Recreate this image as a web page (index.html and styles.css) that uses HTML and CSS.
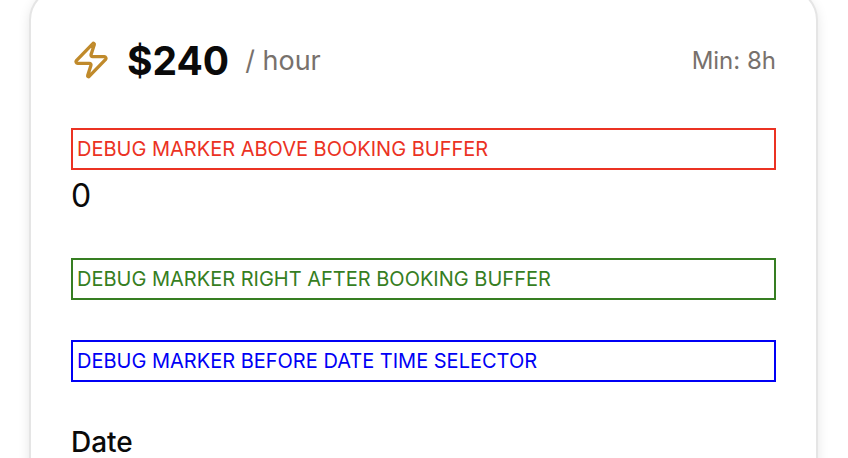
FILE: index.html
```html
<!DOCTYPE html>
<html lang="en">
<head>
<meta charset="utf-8">
<meta name="viewport" content="width=device-width, initial-scale=1">
<title>Booking</title>
<link rel="stylesheet" href="styles.css">
</head>
<body>
<main class="card">
  <header class="rate">
    <svg class="bolt" viewBox="0 0 24 24" aria-hidden="true"><path d="M4 14a1 1 0 0 1-.78-1.63l9.9-10.2a.5.5 0 0 1 .86.46l-1.92 6.02A1 1 0 0 0 13 10h7a1 1 0 0 1 .78 1.63l-9.9 10.2a.5.5 0 0 1-.86-.46l1.92-6.02A1 1 0 0 0 11 14z"/></svg>
    <span class="price">$240</span>
    <span class="unit">/ hour</span>
    <span class="minimum">Min: 8h</span>
  </header>
  <section class="content">
    <div class="buffer">
      <div class="marker marker-red">DEBUG MARKER ABOVE BOOKING BUFFER</div>
      <div class="count">0</div>
    </div>
    <div class="marker marker-green">DEBUG MARKER RIGHT AFTER BOOKING BUFFER</div>
    <div class="marker marker-blue">DEBUG MARKER BEFORE DATE TIME SELECTOR</div>
    <h2 class="label">Date</h2>
  </section>
</main>
</body>
</html>
```

FILE: styles.css
```css
* { box-sizing: border-box; }
html { overflow: hidden; background: #fff; }
body {
  margin: 0;
  font-family: Inter, "Liberation Sans", sans-serif;
  font-optical-sizing: none;
  color: #0a0a0a;
}
.card {
  margin: -12px 30px 0 29px;
  padding: 46px 40px 40px;
  border: 2px solid #e5e5e5;
  border-radius: 32px;
  background: #fff;
  box-shadow: 0 4px 12px rgba(0, 0, 0, 0.1);
}
.rate {
  display: flex;
  align-items: center;
  height: 48px;
  margin-bottom: 44px;
}
.bolt {
  width: 40px;
  height: 40px;
  margin-right: 16px;
  fill: none;
  stroke: #c08a2b;
  stroke-width: 2;
  stroke-linecap: round;
  stroke-linejoin: round;
}
.price {
  margin-right: 16px;
  font-size: 39px;
  font-weight: 700;
}
.unit {
  font-size: 27px;
  color: #78716c;
}
.minimum {
  margin-left: auto;
  font-size: 24px;
  color: #78716c;
}
.content {
  display: flex;
  flex-direction: column;
  gap: 40px;
}
.marker {
  padding: 4px;
  border: 2px solid;
  font-size: 20px;
  line-height: 30px;
}
.marker-red { color: #eb3223; }
.marker-green { color: #367e22; }
.marker-blue { color: #0000f5; }
.count {
  padding-top: 4px;
  font-size: 32px;
  line-height: 44px;
}
.label {
  margin: 0;
  font-size: 28px;
  font-weight: 500;
  line-height: 40px;
}
```
